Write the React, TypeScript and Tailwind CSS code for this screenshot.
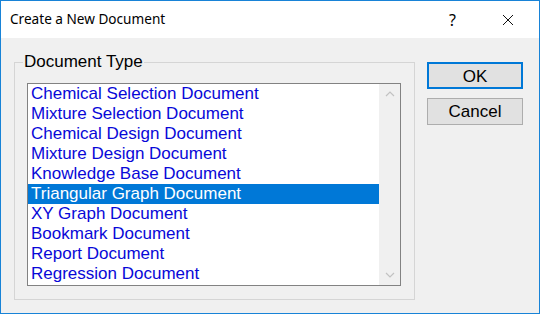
const docTypes = [
  "Chemical Selection Document",
  "Mixture Selection Document",
  "Chemical Design Document",
  "Mixture Design Document",
  "Knowledge Base Document",
  "Triangular Graph Document",
  "XY Graph Document",
  "Bookmark Document",
  "Report Document",
  "Regression Document",
];

const selected = 5;

export default function App() {
  return (
    <div className="w-[540px] h-[314px] border border-[#1883d7] bg-[#f0f0f0] flex flex-col font-['Liberation_Sans',Arial,sans-serif]">
      {/* title bar */}
      <div className="h-[37px] bg-white flex items-center shrink-0">
        <span className="pl-[9px] text-[13.6px] text-black font-['Noto_Sans',sans-serif]">Create a New Document</span>
        <span className="ml-auto mr-[46px] text-[16px] text-black font-['Noto_Sans',sans-serif]">?</span>
        <svg width="12" height="12" viewBox="0 0 12 12" className="mr-[25px]">
          <path d="M1 1 L11 11 M11 1 L1 11" stroke="#111" strokeWidth="1" />
        </svg>
      </div>

      {/* body */}
      <div className="flex pt-[15px] pl-[13px]">
        <fieldset className="w-[401px] border border-[#d5d5d5] pl-[12px] pr-[13px] pb-[13px]">
          <legend className="-ml-[4px] px-[1px] text-[17px] leading-[18px] text-black">Document Type</legend>
          <div className="mt-[12px] flex h-[203px] border border-[#828282] bg-white">
            <div className="w-[351px] flex flex-col">
              {docTypes.map((t, i) => (
                <div
                  key={t}
                  className={`h-[20px] pl-[3px] text-[17px] leading-[20px] ${
                    i === selected ? "bg-[#0078d7] text-white" : "text-[#0808d8]"
                  }`}
                >
                  {t}
                </div>
              ))}
            </div>
            <div className="w-[21px] bg-[#f0f0f0] flex flex-col items-center justify-between py-[7px]">
              <svg width="10" height="6" viewBox="0 0 10 6">
                <path d="M1 5 L5 1 L9 5" stroke="#c2c2c2" strokeWidth="1.2" fill="none" />
              </svg>
              <svg width="10" height="6" viewBox="0 0 10 6">
                <path d="M1 1 L5 5 L9 1" stroke="#c2c2c2" strokeWidth="1.2" fill="none" />
              </svg>
            </div>
          </div>
        </fieldset>

        <div className="ml-[12px] mt-[9px] flex flex-col gap-[9px]">
          <button className="w-[96px] h-[27px] border-2 border-[#0078d7] bg-[#e1e1e1] text-[17px] text-black">
            OK
          </button>
          <button className="w-[96px] h-[27px] border border-[#adadad] bg-[#e1e1e1] text-[17px] text-black">
            Cancel
          </button>
        </div>
      </div>
    </div>
  );
}
